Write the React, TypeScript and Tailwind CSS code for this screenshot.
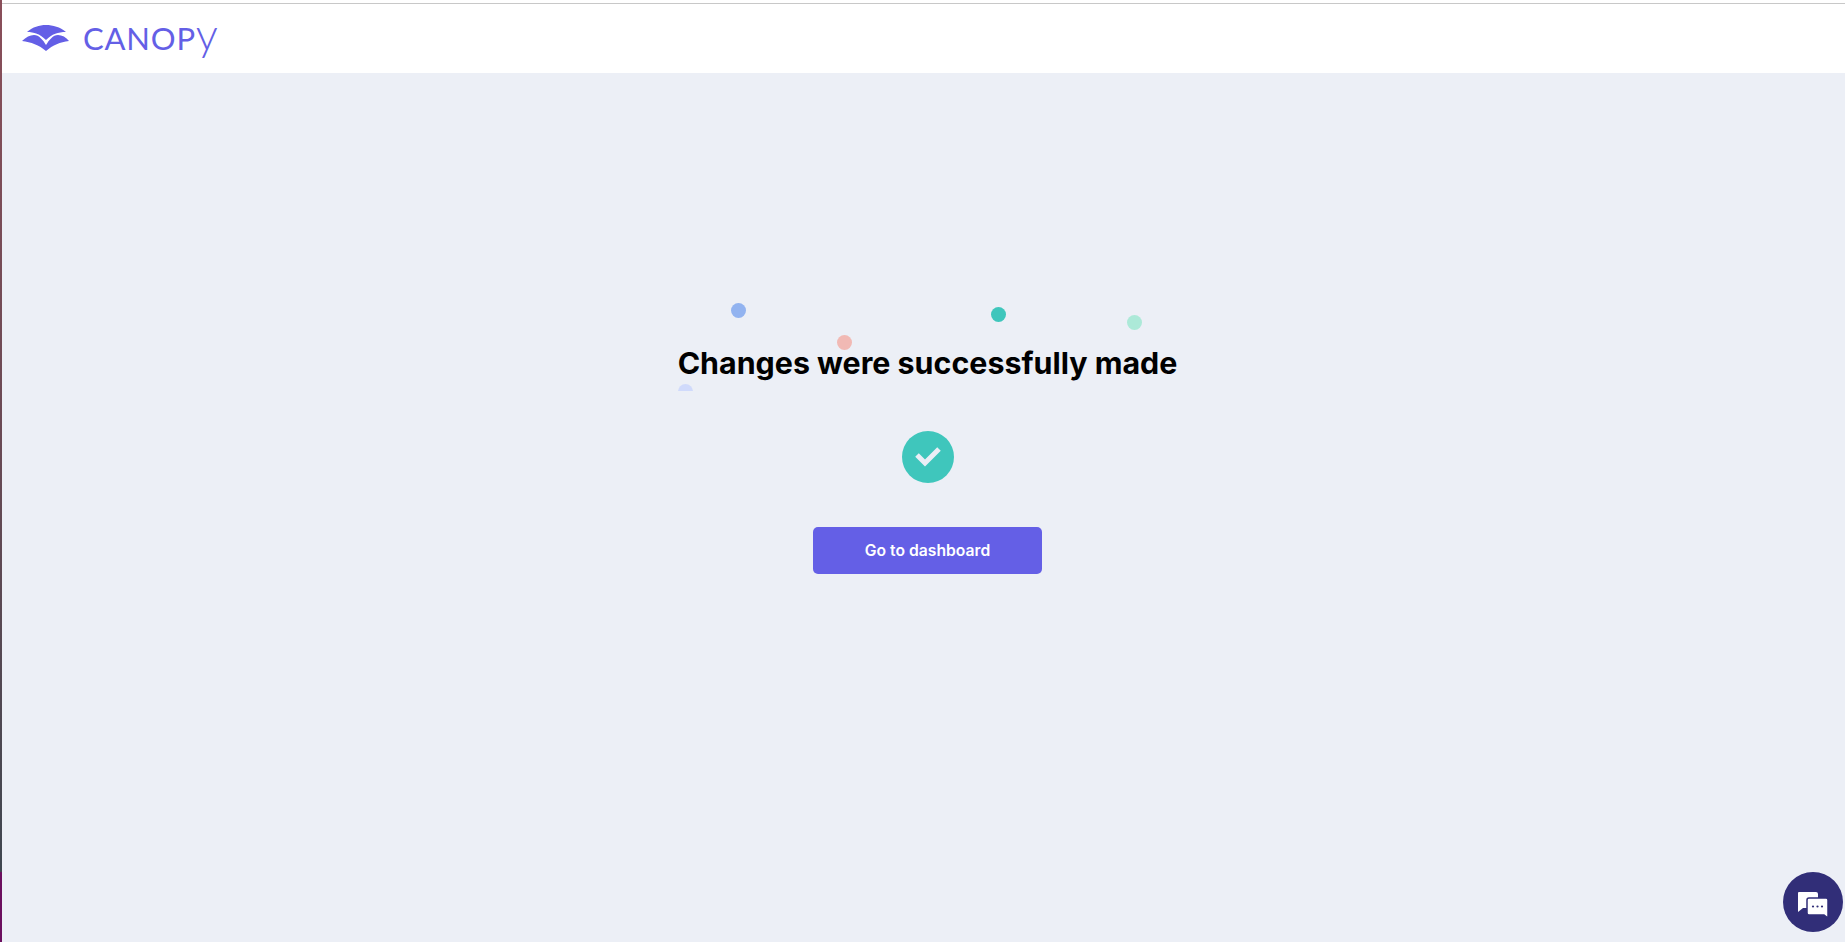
import React from "react";

const Dot = ({ cls }: { cls: string }) => <span className={`absolute block rounded-full ${cls}`} />;

export default function App() {
  return (
    <div className="relative flex h-[942px] w-[1845px] overflow-hidden bg-[#eceff6] font-['Inter',sans-serif]">
      <div className="flex w-[2px] shrink-0 flex-col">
        <div className="flex-1 bg-linear-to-b from-[#8a4f5a] via-[#6a4a55] to-[#3f4650]" />
        <div className="h-[70px] bg-[#6b0f5f]" />
      </div>
      <div className="flex min-w-0 flex-1 flex-col">
        <header className="h-[73px] shrink-0 bg-white">
          <div className="mt-[3px] h-px bg-[#c8c8c8]" />
          <div className="flex items-start pl-[20px] pt-[18px]">
            <svg width="50" height="30" viewBox="0 0 50 30" className="shrink-0">
              <path fill="#645fe6" d="M5 10 C11 5 17 3 24 3 C31 3 38 5 44 10 C36 10 30 12 24 18 C18 12 12 10 5 10 Z" />
              <path fill="#645fe6" d="M0 19 C4 15 8 13 12 13 C17 13 21 18 24 23 C27 18 31 13 36 13 C40 13 44 15 47 19 C38 20 31 23 24 29 C17 23 9 20 0 19 Z" />
            </svg>
            <span className="ml-[11px] -mt-[4px] whitespace-nowrap text-[31px] leading-[31px] font-normal tracking-[0.8px] text-[#645fe6] font-['Lato',sans-serif]">
              CANOP<span className="text-[44px] leading-[31px] font-light lowercase">Y</span>
            </span>
          </div>
        </header>
        <main className="flex flex-1 flex-col items-center pl-[8px]">
          <div className="relative mt-[228px] flex h-[90px] w-[500px] items-end justify-center overflow-hidden">
            <Dot cls="left-[53px] top-[2px] h-[15px] w-[15px] bg-[#92b3f0]" />
            <Dot cls="left-[159px] top-[34px] h-[15px] w-[15px] bg-[#f1b9b4]" />
            <Dot cls="left-[313px] top-[6px] h-[15px] w-[15px] bg-[#3fc6bc]" />
            <Dot cls="left-[449px] top-[14px] h-[15px] w-[15px] bg-[#ace9d8]" />
            <Dot cls="left-0 top-[83px] h-[15px] w-[15px] bg-[#d0dafb]" />
            <h1 className="relative text-[30.4px] leading-[36px] font-bold whitespace-nowrap text-black pb-[10px]">
              Changes were successfully made
            </h1>
          </div>
          <div className="mt-[40px] flex h-[52px] w-[52px] items-center justify-center rounded-full bg-[#3fc6bc]">
            <svg width="52" height="52" viewBox="0 0 52 52" fill="none">
              <path d="M15 24 L23 32 L37 18" stroke="#ebeef6" strokeWidth="5" />
            </svg>
          </div>
          <button className="mt-[44px] h-[47px] w-[229px] rounded-[5px] bg-[#645fe6] text-[15.7px] font-semibold text-white">
            Go to dashboard
          </button>
        </main>
      </div>
      <div className="absolute left-[1783px] top-[872px] flex h-[60px] w-[60px] items-center justify-center rounded-full bg-[#312e78]">
        <svg width="32" height="32" viewBox="0 0 32 32">
          <path fill="#fff" d="M2 6 H19 Q21 6 21 8 V20 Q21 22 19 22 H6 L1 26 V7 Q1 6 2 6 Z" />
          <path fill="#fff" stroke="#312e78" strokeWidth="1.5" d="M12 12 H29 Q31 12 31 14 V32 L27 29 H12 Q10 29 10 27 V14 Q10 12 12 12 Z" />
          <circle cx="16" cy="20.5" r="1.1" fill="#312e78" />
          <circle cx="20.5" cy="20.5" r="1.1" fill="#312e78" />
          <circle cx="25" cy="20.5" r="1.1" fill="#312e78" />
        </svg>
      </div>
    </div>
  );
}
